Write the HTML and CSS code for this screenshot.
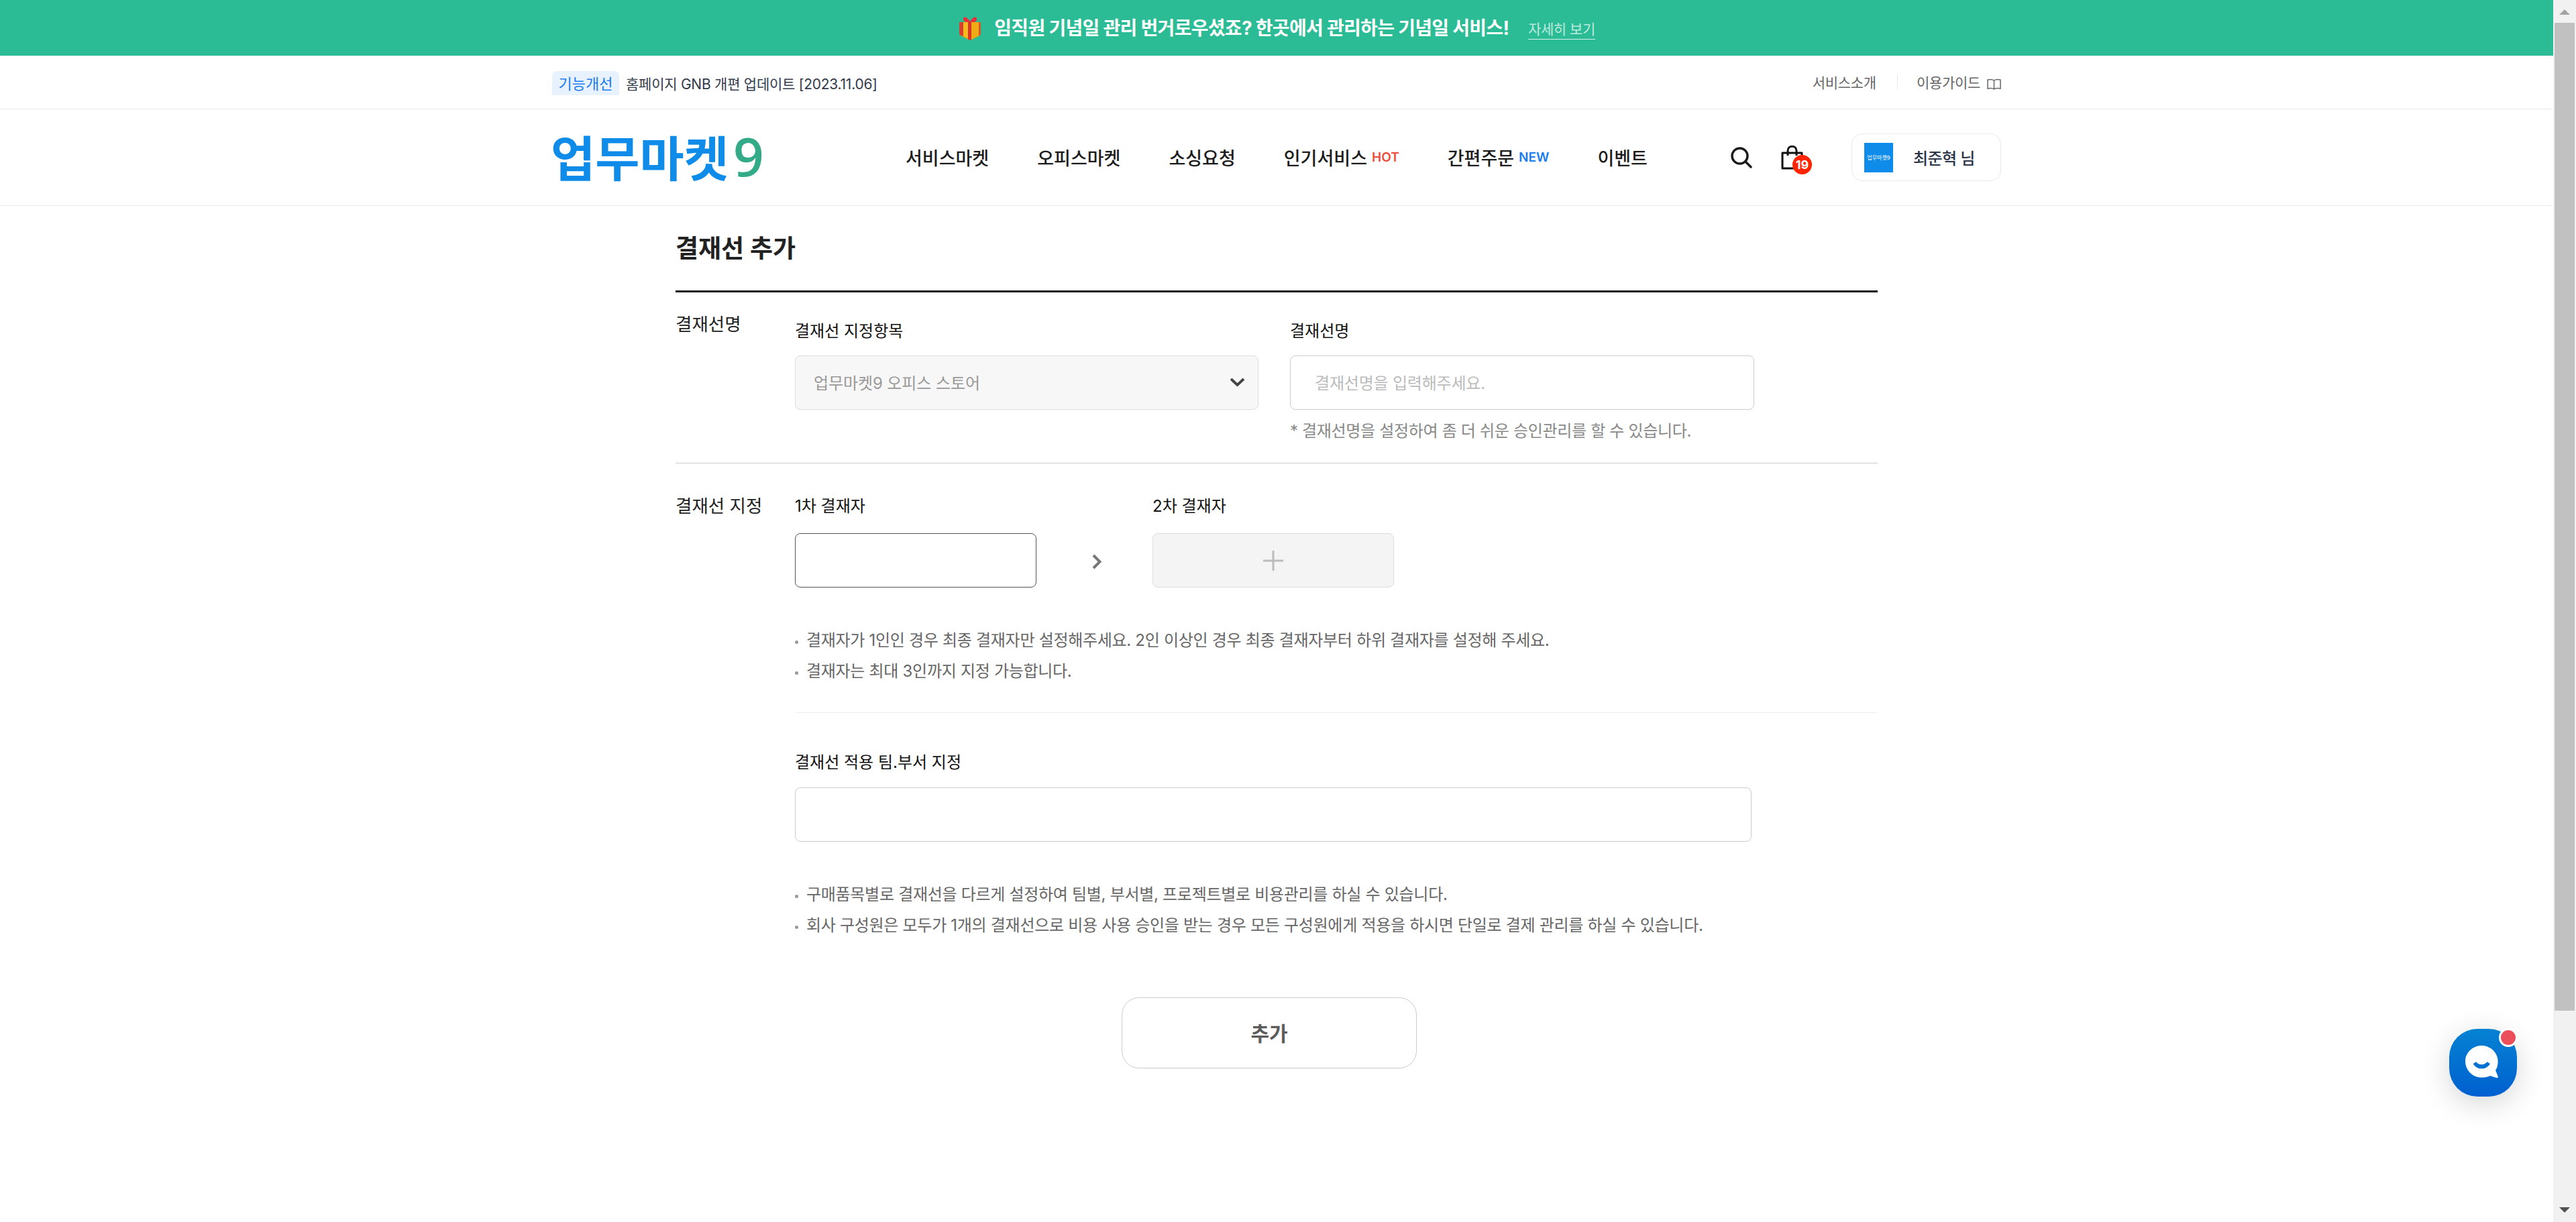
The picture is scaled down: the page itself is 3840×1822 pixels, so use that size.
FILE: index.html
```html
<!DOCTYPE html>
<html lang="ko">
<head>
    <meta charset="UTF-8">
    <meta name="viewport" content="width=device-width, initial-scale=1.0">
    <title>업무마켓9 - 결재선 추가</title>
    <link rel="stylesheet" href="styles.css">
</head>
<body>
    <div class="page">
        <div class="main">
            <div class="promo">
                <svg class="promo-gift" viewBox="0 0 36 36" aria-hidden="true">
                    <path d="M18 8 C13 0 7 0 8 5 C8 9 14 10 18 10 C22 10 28 9 28 5 C29 0 23 0 18 8Z" fill="#e5303a"/>
                    <path d="M2 9 H34 V28 L18 36 L2 28Z" fill="#e8a312"/>
                    <path d="M2 9 H8 V30 L2 28Z" fill="#d5402f"/>
                    <path d="M8 9 H15 V33 L8 30Z" fill="#f5b81e"/>
                    <path d="M15 9 H20 V35 L18 36 L15 34.5Z" fill="#d8342c"/>
                    <path d="M20 9 H31 V29.5 L20 35Z" fill="#f0ab14"/>
                    <path d="M31 9 H34 V28 L31 29.5Z" fill="#cf5a2b"/>
                </svg>
                <strong class="promo-text">임직원 기념일 관리 번거로우셨죠? 한곳에서 관리하는 기념일 서비스!</strong>
                <a class="promo-link">자세히 보기</a>
            </div>

            <div class="util">
                <div class="util-inner">
                    <div class="notice">
                        <span class="notice-tag">기능개선</span>
                        <span class="notice-text">홈페이지 GNB 개편 업데이트 [2023.11.06]</span>
                    </div>
                    <div class="util-links">
                        <a class="util-link">서비스소개</a>
                        <span class="util-sep"></span>
                        <a class="util-link">이용가이드</a>
                        <svg class="util-book" viewBox="0 0 21 17" aria-hidden="true">
                            <path d="M10.5 3 C8.5 1.5 4 1.5 1 2 V15 C4 14.5 8.5 14.5 10.5 16 C12.5 14.5 17 14.5 20 15 V2 C17 1.5 12.5 1.5 10.5 3Z M10.5 3 V16" fill="none" stroke="#666" stroke-width="1.5"/>
                        </svg>
                    </div>
                </div>
            </div>

            <div class="gnb">
                <div class="gnb-inner">
                    <a class="logo">업무마켓<span class="logo-num">9</span></a>
                    <nav class="nav">
                        <a class="nav-item">서비스마켓</a>
                        <a class="nav-item">오피스마켓</a>
                        <a class="nav-item">소싱요청</a>
                        <a class="nav-item">인기서비스<span class="nav-tag hot">HOT</span></a>
                        <a class="nav-item">간편주문<span class="nav-tag new">NEW</span></a>
                        <a class="nav-item">이벤트</a>
                    </nav>
                    <div class="gnb-tools">
                        <svg class="icon-search" viewBox="0 0 32 32" aria-hidden="true">
                            <circle cx="13.5" cy="13.5" r="11.5" fill="none" stroke="#1a1a1a" stroke-width="3.4"/>
                            <path d="M22 22 L30 30" stroke="#1a1a1a" stroke-width="3.4" stroke-linecap="round"/>
                        </svg>
                        <div class="cart">
                            <svg class="icon-bag" viewBox="0 0 33 36" aria-hidden="true">
                                <path d="M2 11 H31 V34 H2Z" fill="none" stroke="#111" stroke-width="3" stroke-linejoin="round"/>
                                <path d="M10 15 V8 C10 -1 23 -1 23 8 V15" fill="none" stroke="#111" stroke-width="3"/>
                            </svg>
                            <span class="cart-count">19</span>
                        </div>
                        <div class="profile">
                            <div class="profile-logo">업무마켓9</div>
                            <span class="profile-name">최준혁 님</span>
                        </div>
                    </div>
                </div>
            </div>

            <div class="content">
                <h2 class="page-title">결재선 추가</h2>

                <div class="section section-name">
                    <div class="section-label">결재선명</div>
                    <div class="section-body fields">
                        <div class="field">
                            <div class="field-label">결재선 지정항목</div>
                            <div class="select-box">
                                <span>업무마켓9 오피스 스토어</span>
                                <svg class="select-arrow" viewBox="0 0 23 13" aria-hidden="true">
                                    <path d="M2 2 L11.5 11 L21 2" fill="none" stroke="#444" stroke-width="3.8"/>
                                </svg>
                            </div>
                        </div>
                        <div class="field field-name">
                            <div class="field-label">결재선명</div>
                            <div class="input-box placeholder">결재선명을 입력해주세요.</div>
                            <p class="hint">* 결재선명을 설정하여 좀 더 쉬운 승인관리를 할 수 있습니다.</p>
                        </div>
                    </div>
                </div>

                <div class="section section-approver">
                    <div class="section-label">결재선 지정</div>
                    <div class="section-body">
                        <div class="approvers">
                            <div class="approver">
                                <div class="field-label">1차 결재자</div>
                                <div class="approver-box active"></div>
                            </div>
                            <div class="approver-arrow">
                                <svg viewBox="0 0 14 25" aria-hidden="true">
                                    <path d="M2 3 L11.5 12.5 L2 22" fill="none" stroke="#777" stroke-width="4"/>
                                </svg>
                            </div>
                            <div class="approver">
                                <div class="field-label">2차 결재자</div>
                                <div class="approver-box empty">
                                    <svg viewBox="0 0 30 30" aria-hidden="true">
                                        <path d="M15 0 V30 M0 15 H30" stroke="#bbb" stroke-width="3"/>
                                    </svg>
                                </div>
                            </div>
                        </div>
                        <ul class="notes">
                            <li>결재자가 1인인 경우 최종 결재자만 설정해주세요. 2인 이상인 경우 최종 결재자부터 하위 결재자를 설정해 주세요.</li>
                            <li>결재자는 최대 3인까지 지정 가능합니다.</li>
                        </ul>
                        <div class="team-block">
                            <div class="field-label">결재선 적용 팀.부서 지정</div>
                            <div class="input-box team-input"></div>
                            <ul class="notes">
                                <li>구매품목별로 결재선을 다르게 설정하여 팀별, 부서별, 프로젝트별로 비용관리를 하실 수 있습니다.</li>
                                <li>회사 구성원은 모두가 1개의 결재선으로 비용 사용 승인을 받는 경우 모든 구성원에게 적용을 하시면 단일로 결제 관리를 하실 수 있습니다.</li>
                            </ul>
                        </div>
                    </div>
                </div>

                <div class="actions">
                    <button class="btn-add">추가</button>
                </div>
            </div>
        </div>

        <div class="scrollbar">
            <div class="scroll-btn"><span class="arrow-up"></span></div>
            <div class="scroll-thumb"></div>
            <div class="scroll-track"></div>
            <div class="scroll-btn"><span class="arrow-down"></span></div>
        </div>

        <div class="chat-btn">
            <svg viewBox="0 0 60 60" aria-hidden="true">
                <path d="M27 1 C42 1 54 13 54 27 C54 33 53 38 50 42 L54 52 C54.5 54 53.5 55 51.5 54.5 L41 51 C37 53 32 54 27 54 C12 54 0 42 0 27 C0 13 12 1 27 1Z" fill="#fff"/>
                <path d="M13 31 L18 28 C22 34 32 34 36 28 L41 31 C35 42 19 42 13 31Z" fill="#0670d2"/>
            </svg>
            <span class="chat-dot"></span>
        </div>
    </div>
</body>
</html>
```

FILE: styles.css
```css
* {
    margin: 0;
    padding: 0;
    box-sizing: border-box;
}

body {
    font-family: Inter, "Noto Sans CJK KR", sans-serif;
    background: white;
    color: #111;
}

.page {
    display: flex;
    height: 100vh;
    overflow: hidden;
}

.main {
    flex: 1;
    min-width: 0;
}

/* top promo */
.promo {
    height: 83px;
    background: #2bbc96;
    display: flex;
    align-items: center;
    justify-content: center;
    color: white;
}

.promo-gift {
    width: 36px;
    height: 36px;
    margin-right: 18px;
}

.promo-text {
    font-size: 28px;
    font-weight: 700;
    line-height: 40px;
    letter-spacing: -0.7px;
}

.promo-link {
    font-size: 21px;
    line-height: 28px;
    letter-spacing: -0.5px;
    color: rgba(255, 255, 255, 0.7);
    border-bottom: 1px solid rgba(255, 255, 255, 0.8);
    margin-left: 29px;
    margin-top: 6px;
}

/* util bar */
.util {
    height: 80px;
    border-bottom: 1px solid #e8e8e8;
}

.util-inner,
.gnb-inner {
    width: 2160px;
    margin: 0 auto;
    display: flex;
}

.util-inner {
    justify-content: space-between;
    padding-top: 23px;
}

.notice {
    display: flex;
    align-items: center;
}

.notice-tag {
    width: 100px;
    height: 36px;
    line-height: 38px;
    text-align: center;
    font-size: 22px;
    color: #1a7cf0;
    background: #e8f2ff;
    border-radius: 8px 8px 0 0;
}

.notice-text {
    font-size: 21px;
    letter-spacing: -0.25px;
    color: #333a4a;
    margin-left: 10px;
}

.util-links {
    display: flex;
    align-items: center;
    height: 22px;
    margin-top: 5px;
}

.util-link {
    font-size: 21px;
    letter-spacing: -0.3px;
    color: #666;
}

.util-sep {
    width: 1px;
    height: 22px;
    background: #e6e6e6;
    margin: 0 28px 0 31px;
}

.util-book {
    width: 21px;
    height: 17px;
    margin-left: 10px;
    margin-top: 6px;
}

/* gnb */
.gnb {
    height: 144px;
    border-bottom: 1px solid #e8e8e8;
}

.gnb-inner {
    height: 143px;
    align-items: center;
}

.logo {
    width: 527px;
    font-size: 72px;
    font-weight: 700;
    line-height: 80px;
    color: #0f8ce9;
    white-space: nowrap;
    text-indent: -2px;
}

.logo-num {
    color: #34ab88;
    font-family: "Open Sans", sans-serif;
    font-size: 80px;
    font-weight: 600;
    line-height: 1;
    margin-left: 7px;
}

.nav {
    display: flex;
    gap: 72px;
    width: 1230px;
}

.nav-item {
    display: flex;
    align-items: center;
    font-size: 27px;
    font-weight: 500;
    color: #1c1c1c;
    white-space: nowrap;
}

.nav-tag {
    font-size: 19px;
    font-weight: 600;
    margin-left: 7px;
}

.hot {
    color: #ee4a3a;
}

.new {
    color: #1a7cf0;
}

.gnb-tools {
    display: flex;
    align-items: center;
    flex: 1;
}

.icon-search {
    width: 32px;
    height: 32px;
}

.cart {
    position: relative;
    width: 33px;
    height: 36px;
    margin-left: 43px;
}

.icon-bag {
    width: 33px;
    height: 36px;
    display: block;
}

.cart-count {
    position: absolute;
    left: 17px;
    top: 14px;
    width: 29px;
    height: 29px;
    border-radius: 50%;
    background: #ff2400;
    color: white;
    font-size: 18px;
    font-weight: 700;
    line-height: 29px;
    text-align: center;
}

.profile {
    display: flex;
    align-items: center;
    width: 223px;
    height: 71px;
    margin-left: 72px;
    padding-left: 18px;
    border: 1px solid #e8e9ec;
    border-radius: 16px;
}

.profile-logo {
    width: 43px;
    height: 44px;
    background: #0f8ce9;
    color: white;
    font-size: 8px;
    line-height: 44px;
    text-align: center;
    white-space: nowrap;
    overflow: hidden;
}

.profile-name {
    font-size: 24px;
    font-weight: 500;
    letter-spacing: -0.6px;
    color: #2b3347;
    margin-left: 30px;
}

/* form */
.content {
    width: 1792px;
    margin: 0 auto;
}

.page-title {
    font-size: 37px;
    font-weight: 700;
    line-height: 46px;
    color: #222;
    padding: 41px 0 39px;
    border-bottom: 3px solid #111;
}

.section {
    display: grid;
    grid-template-columns: 178px 1fr;
}

.section-name {
    padding: 30px 0 31px;
    height: 255px;
    border-bottom: 1px solid #ccc;
}

.section-name .section-body {
    padding-top: 11px;
}

.section-approver {
    padding-top: 46px;
}

.section-approver .section-body {
    padding-top: 1px;
}

.section-label {
    font-size: 26.5px;
    line-height: 34px;
    color: #222;
}

.fields {
    display: flex;
    gap: 47px;
}

.field {
    width: 691px;
}

.field-name {
    width: 692px;
}

.field-label {
    font-size: 24px;
    line-height: 34px;
    color: #111;
}

.select-box {
    height: 81px;
    margin-top: 19px;
    display: flex;
    align-items: center;
    justify-content: space-between;
    padding: 0 19px 2px 27px;
    background: #f7f7f7;
    border: 1px solid #ddd;
    border-radius: 8px;
    font-size: 24px;
    letter-spacing: -0.1px;
    color: #999;
}

.select-arrow {
    width: 23px;
    height: 13px;
}

.input-box {
    height: 81px;
    margin-top: 19px;
    display: flex;
    align-items: center;
    padding: 0 0 2px 36px;
    border: 1px solid #ccc;
    border-radius: 8px;
    font-size: 24px;
    letter-spacing: -0.2px;
}

.placeholder {
    color: #bbb;
}

.hint {
    margin-top: 16px;
    font-size: 24px;
    line-height: 32px;
    letter-spacing: -0.33px;
    color: #888;
}

.approvers {
    display: flex;
}

.approver {
    width: 360px;
}

.approver-box {
    height: 81px;
    margin-top: 23px;
    border-radius: 8px;
}

.active {
    border: 1px solid #555;
}

.empty {
    display: flex;
    align-items: center;
    justify-content: center;
    background: #f4f4f4;
    border: 1px solid #ddd;
}

.empty svg {
    width: 30px;
    height: 30px;
}

.approver-arrow {
    width: 173px;
    padding: 87px 0 0 83px;
}

.approver-arrow svg {
    width: 14px;
    height: 25px;
}

.notes {
    list-style: none;
    margin-top: 56px;
}

.notes li {
    display: flex;
    align-items: center;
    font-size: 24px;
    line-height: 46px;
    letter-spacing: -0.3px;
    color: #666;
    white-space: nowrap;
}

.notes li::before {
    content: "";
    width: 5px;
    height: 5px;
    border-radius: 50%;
    background: #999;
    margin-right: 12px;
    margin-top: 4px;
}

.team-block {
    margin-top: 38px;
    padding-top: 57px;
    border-top: 1px solid #eee;
}

.team-input {
    width: 1426px;
    margin-top: 20px;
}

.actions {
    padding: 84px 0 0 665px;
}

.btn-add {
    display: block;
    width: 440px;
    height: 106px;
    padding-bottom: 2px;
    background: white;
    border: 1px solid #ccc;
    border-radius: 26px;
    font-family: inherit;
    font-size: 30px;
    font-weight: 700;
    color: #5c5c5c;
}

/* scrollbar */
.scrollbar {
    width: 34px;
    background: #f1f1f1;
    display: flex;
    flex-direction: column;
    align-items: center;
}

.scroll-btn {
    height: 34px;
    width: 100%;
    display: flex;
    justify-content: center;
    align-items: center;
}

.scroll-thumb {
    width: 30px;
    height: 1473px;
    background: #c1c1c1;
}

.scroll-track {
    flex: 1;
}

.arrow-up {
    border: 8px solid transparent;
    border-top: 0;
    border-bottom-color: #a3a3a3;
    margin-top: 2px;
}

.arrow-down {
    border: 8px solid transparent;
    border-bottom: 0;
    border-top-color: #505050;
    margin-top: -2px;
}

/* chat launcher */
.chat-btn {
    position: fixed;
    right: 88px;
    bottom: 187px;
    width: 101px;
    height: 101px;
    border-radius: 42px;
    background: linear-gradient(180deg, #0582d2 0%, #0060d0 100%);
    box-shadow: 0 10px 44px rgba(0, 0, 0, 0.16);
    display: flex;
    align-items: center;
    justify-content: center;
}

.chat-btn svg {
    width: 54px;
    height: 54px;
}

.chat-dot {
    position: absolute;
    right: 2px;
    top: 2px;
    width: 22px;
    height: 22px;
    border-radius: 50%;
    background: #ec4f5c;
    border: 3px solid white;
    box-sizing: content-box;
    margin: -3px;
}
```
